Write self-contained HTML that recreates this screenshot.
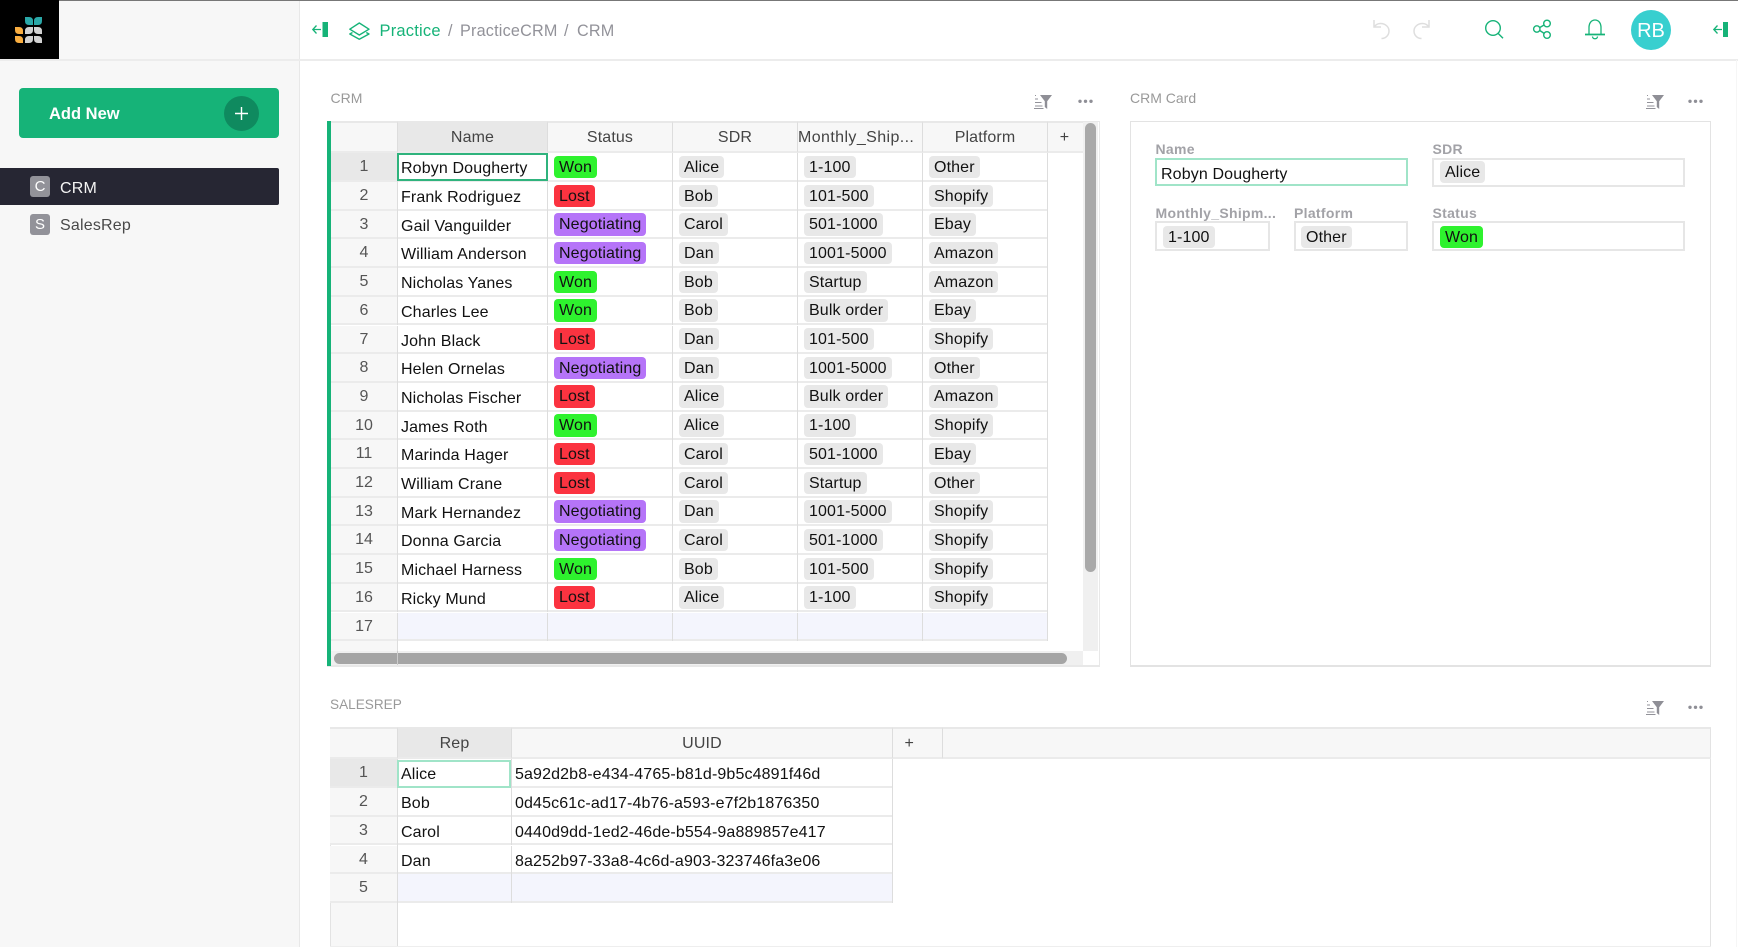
<!DOCTYPE html>
<html><head><meta charset="utf-8"><title>CRM</title>
<style>
*{box-sizing:border-box}
html,body{margin:0;padding:0;width:1738px;height:947px;overflow:hidden;background:#fff}
body{font-family:"Liberation Sans",sans-serif;font-size:16px;color:#111;position:relative}
#w{position:absolute;left:0;top:0;width:1738px;height:947px;overflow:hidden;filter:blur(.3px)}
.a{position:absolute}
.r{position:absolute;left:331px;width:716px;height:28.7px;background:#fff}
.r2{left:330px;width:562px}
.l{position:absolute;left:0;right:0;bottom:0;height:2px;background:#ebebeb}
.n{position:absolute;left:0;top:0;width:66px;height:28.7px;background:#f7f7f7;text-align:center;line-height:27px;color:#555;border-bottom:2px solid #ebebeb}
.r2 .n{width:67px}
.c{position:absolute;top:0;height:28.7px;border-left:1px solid #ddd;white-space:nowrap;letter-spacing:.13px;line-height:32px;padding-left:3px}
.c1{left:66px;width:150px}.c2{left:216px;width:125px;padding-left:6px}.c3{left:341px;width:125px;padding-left:6px}.c4{left:466px;width:125px;padding-left:6px}.c5{left:591px;width:125px;padding-left:6px}
.d1{left:67px;width:114px}.d2{left:181px;width:381px}
.p{display:inline-block;height:22.4px;line-height:23px;padding:0 5px;border-radius:4px;background:#e8e8e8;vertical-align:top;margin-top:2.6px;letter-spacing:.13px}
.w{background:#2ef22e}.x{background:#fb3340}.g{background:#b574f8}
.h{position:absolute;top:121px;height:32px;line-height:30.5px;text-align:center;color:#444;background:#f7f7f7;border-left:1px solid #ddd;border-bottom:2px solid #ebebeb;border-top:2px solid #e8e8e8;letter-spacing:.13px;white-space:nowrap;overflow:hidden}
.s{position:absolute;font-size:14px;color:#999;line-height:16px;white-space:nowrap}
.lb{position:absolute;font-size:14px;font-weight:bold;color:#a2a2a7;letter-spacing:.3px;line-height:16px;white-space:nowrap}
.i{position:absolute;border:2px solid #e6e6e6;background:#fff}
.cp{position:absolute}
.bc{position:absolute;top:.5px;line-height:60px;font-size:16.2px;letter-spacing:.2px;color:#929299;white-space:nowrap}
svg{position:absolute;overflow:visible}
</style></head><body><div id="w">

<!-- top line / header -->
<div class="a" style="left:0;top:0;width:1738px;height:1px;background:#777"></div>
<div class="a" style="left:0;top:1px;width:300px;height:946px;background:#f7f7f7;border-right:1px solid #e8e8e8"></div>
<div class="a" style="left:0;top:59px;width:1738px;height:2px;background:#ececec"></div>
<div class="a" style="left:0;top:0;width:59px;height:59px;background:#000"></div>
<svg style="left:0;top:0" width="59" height="59">
<g fill="#2aa8a8"><path d="M25 17h4q4 0 4 4v4h-4q-4 0-4-4z"/><path d="M42 17h-4q-4 0-4 4v4h4q4 0 4-4z"/></g>
<g fill="#f9ae41"><path d="M15 27h4q4 0 4 4v3h-4q-4 0-4-4z"/><path d="M15 36h4q4 0 4 4v3h-4q-4 0-4-4z"/></g>
<g fill="#d2d2d2"><path d="M25 34h4q4 0 4-4v-3h-4q-4 0-4 4z"/><path d="M42 34h-4q-4 0-4-4v-3h4q4 0 4 4z"/><path d="M25 43h4q4 0 4-4v-3h-4q-4 0-4 4z"/><path d="M42 43h-4q-4 0-4-4v-3h4q4 0 4 4z"/></g>
</svg>

<!-- sidebar -->
<div class="a" style="left:19px;top:88px;width:260px;height:50px;background:#16b378;border-radius:4px"></div>
<div class="a" style="left:49px;top:88.5px;line-height:50px;font-weight:bold;font-size:16.5px;color:#fff">Add New</div>
<div class="a" style="left:224px;top:95.5px;width:35px;height:35px;border-radius:50%;background:#0f8a5f"></div>
<svg style="left:224px;top:95.5px" width="35" height="35"><path d="M17.5 11v13M11 17.5h13" stroke="#fff" stroke-width="1.4" fill="none"/></svg>
<div class="a" style="left:0;top:168px;width:279px;height:37px;background:#262633;border-radius:0 2px 2px 0"></div>
<div class="a" style="left:30px;top:176px;width:20px;height:21px;background:#929299;border-radius:3px;color:#fff;text-align:center;line-height:21px;font-size:15px">C</div>
<div class="a" style="left:60px;top:170px;line-height:38px;color:#f4f4f4;letter-spacing:.2px">CRM</div>
<div class="a" style="left:30px;top:214px;width:20px;height:21px;background:#929299;border-radius:3px;color:#fff;text-align:center;line-height:21px;font-size:15px">S</div>
<div class="a" style="left:60px;top:207px;line-height:38px;color:#494949;letter-spacing:.2px">SalesRep</div>

<!-- breadcrumbs -->
<svg style="left:312px;top:22px" width="17" height="16"><path d="M9 7.5H1M4.5 3.5L.8 7.5l3.7 4" stroke="#16b378" stroke-width="1.3" fill="none"/><rect x="10.5" y="0" width="5.5" height="15" fill="#16b378"/></svg>
<svg style="left:349px;top:22px" width="21" height="18" fill="none" stroke="#16b378" stroke-width="1.4" stroke-linejoin="round"><path d="M10.3 1L20 7.2 10.3 13 .8 7.2z"/><path d="M3.5 10.5L.8 12 10.3 17.2 20 12l-2.7-1.5"/></svg>
<div class="bc" style="left:379.5px;color:#16b378;font-size:16.5px">Practice</div>
<div class="bc" style="left:448px">/</div>
<div class="bc" style="left:460px">PracticeCRM</div>
<div class="bc" style="left:564px">/</div>
<div class="bc" style="left:577px">CRM</div>

<!-- header right -->
<svg style="left:1372px;top:19px" width="20" height="21" fill="none" stroke="#dedede" stroke-width="1.5"><path d="M2 1v7h7"/><path d="M2.5 7.5C4 5.5 6 4.5 8.5 4.5c5 0 8.5 3.5 8.5 7.5s-3 7.5-7.5 7.5"/></svg>
<svg style="left:1411px;top:19px" width="20" height="21" fill="none" stroke="#dedede" stroke-width="1.5"><path d="M18 1v7h-7"/><path d="M17.5 7.5C16 5.5 14 4.500 11.500 4.500c-5 0-8.500 3.500-8.500 7.500s3 7.500 7.500 7.500"/></svg>
<svg style="left:1485px;top:20px" width="19" height="19" fill="none" stroke="#16b378" stroke-width="1.4"><circle cx="8" cy="8" r="7.300"/><path d="M13 13.200l5 5"/></svg>
<svg style="left:1533px;top:19px" width="19" height="21" fill="none" stroke="#16b378" stroke-width="1.4"><circle cx="14" cy="4.500" r="3.300"/><circle cx="14" cy="16" r="3.300"/><circle cx="3.800" cy="10" r="3.200"/><path d="M6.800 8.500l4.300-2.500M6.800 11.500l4.500 3"/></svg>
<svg style="left:1585px;top:19px" width="21" height="21" fill="none" stroke="#16b378" stroke-width="1.3"><path d="M4 15V8.500C4 4 6.500 1 10 1s6 3 6 7.500V15"/><path d="M0 15.500h20" stroke-width="1.8"/><path d="M7.500 17.500c0 3 5 3 5 0"/></svg>
<div class="a" style="left:1631px;top:9.5px;width:40px;height:40px;border-radius:50%;background:#38cfcf;color:#fff;text-align:center;line-height:43px;font-size:20px">RB</div>
<svg style="left:1713px;top:22px" width="17" height="16"><path d="M9 7.500H1M4.500 3.500L.8 7.500l3.700 4" stroke="#16b378" stroke-width="1.300" fill="none"/><rect x="10" y="0" width="5" height="15" fill="#16b378"/></svg>

<!-- CRM title -->
<div class="s" style="left:330.500px;top:90px">CRM</div>
<svg style="left:1034px;top:94px" width="18" height="16"><use href="#fi"/></svg>
<svg style="left:1078px;top:98px" width="16" height="6"><use href="#dt"/></svg>
<svg width="0" height="0" style="left:0;top:0"><defs>
<g id="fi"><path d="M6 1h12l-4.800 6.200V15l-2.400-2V7.200z" fill="#8f8f96"/><path d="M1 1.500h1M1 5h3M1 8.500h6.500M1 12h7.500" stroke="#929299" stroke-width="1" fill="none"/><path d="M0 14.500h9.500" stroke="#929299" stroke-width="1" fill="none"/></g>
<g id="dt" fill="#8f8f96"><circle cx="2" cy="3.300" r="1.700"/><circle cx="7.500" cy="3.300" r="1.700"/><circle cx="13" cy="3.300" r="1.700"/></g>
</defs></svg>

<!-- CRM grid frame -->
<div class="a" style="left:327px;top:121px;width:772.500px;height:545.500px;background:#fff;border:1px solid #e8e8e8;border-bottom-width:2px;border-left:0"></div>
<div class="a" style="left:327px;top:121px;width:4px;height:545px;background:#16b378"></div>
<div class="h" style="left:331px;width:66px;border-left:0"></div>
<div class="h" style="left:397px;width:150px;background:#e8e8e8">Name</div>
<div class="h" style="left:547px;width:125px">Status</div>
<div class="h" style="left:672px;width:125px">SDR</div>
<div class="h" style="left:797px;width:125px;text-align:left;padding-left:0;letter-spacing:.4px">Monthly_Ship...</div>
<div class="h" style="left:922px;width:125px">Platform</div>
<div class="h" style="left:1047px;width:36px;padding-right:2px">+</div>

<div class="r" style="top:153.300px"><div class="l"></div><div class="n" style="background:#e8e8e8">1</div><div class="c c1">Robyn Dougherty</div><div class="c c2"><span class="p w">Won</span></div><div class="c c3"><span class="p">Alice</span></div><div class="c c4"><span class="p">1-100</span></div><div class="c c5"><span class="p">Other</span></div></div>
<div class="r" style="top:182px"><div class="l"></div><div class="n">2</div><div class="c c1">Frank Rodriguez</div><div class="c c2"><span class="p x">Lost</span></div><div class="c c3"><span class="p">Bob</span></div><div class="c c4"><span class="p">101-500</span></div><div class="c c5"><span class="p">Shopify</span></div></div>
<div class="r" style="top:210.700px"><div class="l"></div><div class="n">3</div><div class="c c1">Gail Vanguilder</div><div class="c c2"><span class="p g">Negotiating</span></div><div class="c c3"><span class="p">Carol</span></div><div class="c c4"><span class="p">501-1000</span></div><div class="c c5"><span class="p">Ebay</span></div></div>
<div class="r" style="top:239.400px"><div class="l"></div><div class="n">4</div><div class="c c1">William Anderson</div><div class="c c2"><span class="p g">Negotiating</span></div><div class="c c3"><span class="p">Dan</span></div><div class="c c4"><span class="p">1001-5000</span></div><div class="c c5"><span class="p">Amazon</span></div></div>
<div class="r" style="top:268.100px"><div class="l"></div><div class="n">5</div><div class="c c1">Nicholas Yanes</div><div class="c c2"><span class="p w">Won</span></div><div class="c c3"><span class="p">Bob</span></div><div class="c c4"><span class="p">Startup</span></div><div class="c c5"><span class="p">Amazon</span></div></div>
<div class="r" style="top:296.800px"><div class="l"></div><div class="n">6</div><div class="c c1">Charles Lee</div><div class="c c2"><span class="p w">Won</span></div><div class="c c3"><span class="p">Bob</span></div><div class="c c4"><span class="p">Bulk order</span></div><div class="c c5"><span class="p">Ebay</span></div></div>
<div class="r" style="top:325.500px"><div class="l"></div><div class="n">7</div><div class="c c1">John Black</div><div class="c c2"><span class="p x">Lost</span></div><div class="c c3"><span class="p">Dan</span></div><div class="c c4"><span class="p">101-500</span></div><div class="c c5"><span class="p">Shopify</span></div></div>
<div class="r" style="top:354.200px"><div class="l"></div><div class="n">8</div><div class="c c1">Helen Ornelas</div><div class="c c2"><span class="p g">Negotiating</span></div><div class="c c3"><span class="p">Dan</span></div><div class="c c4"><span class="p">1001-5000</span></div><div class="c c5"><span class="p">Other</span></div></div>
<div class="r" style="top:382.900px"><div class="l"></div><div class="n">9</div><div class="c c1">Nicholas Fischer</div><div class="c c2"><span class="p x">Lost</span></div><div class="c c3"><span class="p">Alice</span></div><div class="c c4"><span class="p">Bulk order</span></div><div class="c c5"><span class="p">Amazon</span></div></div>
<div class="r" style="top:411.600px"><div class="l"></div><div class="n">10</div><div class="c c1">James Roth</div><div class="c c2"><span class="p w">Won</span></div><div class="c c3"><span class="p">Alice</span></div><div class="c c4"><span class="p">1-100</span></div><div class="c c5"><span class="p">Shopify</span></div></div>
<div class="r" style="top:440.300px"><div class="l"></div><div class="n">11</div><div class="c c1">Marinda Hager</div><div class="c c2"><span class="p x">Lost</span></div><div class="c c3"><span class="p">Carol</span></div><div class="c c4"><span class="p">501-1000</span></div><div class="c c5"><span class="p">Ebay</span></div></div>
<div class="r" style="top:469px"><div class="l"></div><div class="n">12</div><div class="c c1">William Crane</div><div class="c c2"><span class="p x">Lost</span></div><div class="c c3"><span class="p">Carol</span></div><div class="c c4"><span class="p">Startup</span></div><div class="c c5"><span class="p">Other</span></div></div>
<div class="r" style="top:497.700px"><div class="l"></div><div class="n">13</div><div class="c c1">Mark Hernandez</div><div class="c c2"><span class="p g">Negotiating</span></div><div class="c c3"><span class="p">Dan</span></div><div class="c c4"><span class="p">1001-5000</span></div><div class="c c5"><span class="p">Shopify</span></div></div>
<div class="r" style="top:526.400px"><div class="l"></div><div class="n">14</div><div class="c c1">Donna Garcia</div><div class="c c2"><span class="p g">Negotiating</span></div><div class="c c3"><span class="p">Carol</span></div><div class="c c4"><span class="p">501-1000</span></div><div class="c c5"><span class="p">Shopify</span></div></div>
<div class="r" style="top:555.100px"><div class="l"></div><div class="n">15</div><div class="c c1">Michael Harness</div><div class="c c2"><span class="p w">Won</span></div><div class="c c3"><span class="p">Bob</span></div><div class="c c4"><span class="p">101-500</span></div><div class="c c5"><span class="p">Shopify</span></div></div>
<div class="r" style="top:583.800px"><div class="l"></div><div class="n">16</div><div class="c c1">Ricky Mund</div><div class="c c2"><span class="p x">Lost</span></div><div class="c c3"><span class="p">Alice</span></div><div class="c c4"><span class="p">1-100</span></div><div class="c c5"><span class="p">Shopify</span></div></div>
<div class="r" style="top:612.500px;background:#f4f5fd"><div class="l"></div><div class="n">17</div><div class="c c1"></div><div class="c c2"></div><div class="c c3"></div><div class="c c4"></div><div class="c c5"></div></div>
<div class="a" style="left:1047px;top:153px;width:1px;height:488px;background:#ddd"></div>
<div class="a" style="left:397px;top:153.300px;width:151px;height:27.800px;border:2px solid #2fb37d"></div>
<!-- scroll -->
<div class="a" style="left:331px;top:641px;width:66px;height:24px;background:#f7f7f7"></div>
<div class="a" style="left:397px;top:641px;width:1px;height:24px;background:#ddd"></div>
<div class="a" style="left:1083px;top:122px;width:15px;height:529px;background:#f0f0f0"></div>
<div class="a" style="left:1085px;top:123px;width:11px;height:449px;background:#a9a9a9;border-radius:6px"></div>
<div class="a" style="left:331px;top:651px;width:752px;height:14px;background:#f0f0f0"></div>
<div class="a" style="left:334px;top:652.500px;width:733px;height:11px;background:#a5a5a5;border-radius:6px"></div>
<div class="a" style="left:397px;top:651px;width:1px;height:14px;background:#ccc"></div>

<!-- card -->
<div class="s" style="left:1130px;top:90px">CRM Card</div>
<svg style="left:1646px;top:94px" width="18" height="16"><use href="#fi"/></svg>
<svg style="left:1688px;top:98px" width="16" height="6"><use href="#dt"/></svg>
<div class="a" style="left:1130px;top:121px;width:581px;height:545.500px;border:1px solid #e3e3e3;border-bottom-width:2px"></div>
<div class="lb" style="left:1155.500px;top:141px">Name</div>
<div class="i" style="left:1155px;top:158px;width:253px;height:27.500px;border-color:#a0e4c8"></div>
<div class="a" style="left:1161px;top:159px;line-height:31px;height:28px;letter-spacing:.13px">Robyn Dougherty</div>
<div class="lb" style="left:1432.500px;top:141px">SDR</div>
<div class="i" style="left:1432px;top:158px;width:253px;height:29px"></div>
<div class="cp" style="left:1440px;top:158.500px"><span class="p">Alice</span></div>
<div class="lb" style="left:1155.500px;top:205px">Monthly_Shipm...</div>
<div class="i" style="left:1155px;top:221px;width:115px;height:30px"></div>
<div class="cp" style="left:1163px;top:223.500px"><span class="p">1-100</span></div>
<div class="lb" style="left:1294px;top:205px">Platform</div>
<div class="i" style="left:1294px;top:221px;width:114px;height:30px"></div>
<div class="cp" style="left:1301px;top:223.500px"><span class="p">Other</span></div>
<div class="lb" style="left:1432.500px;top:205px">Status</div>
<div class="i" style="left:1432px;top:221px;width:253px;height:30px"></div>
<div class="cp" style="left:1440px;top:223.500px"><span class="p w">Won</span></div>

<!-- SALESREP -->
<div class="s" style="left:330px;top:697px;font-size:13.600px">SALESREP</div>
<svg style="left:1646px;top:700px" width="18" height="16"><use href="#fi"/></svg>
<svg style="left:1688px;top:704px" width="16" height="6"><use href="#dt"/></svg>
<div class="a" style="left:330px;top:727px;width:1381px;height:221px;border:1px solid #e3e3e3;border-top:0"></div>
<div class="a" style="left:330px;top:946px;width:1381px;height:1px;background:#eee"></div>
<div class="h" style="top:727px;left:330px;width:68px;border-left:0"></div>
<div class="h" style="top:727px;left:397px;width:114px;background:#e8e8e8">Rep</div>
<div class="h" style="top:727px;left:511px;width:381px">UUID</div>
<div class="h" style="top:727px;left:892px;width:50px;text-align:left;padding-left:11.500px">+</div>
<div class="h" style="top:727px;left:942px;width:769px;border-right:1px solid #e3e3e3"></div>
<div class="a" style="left:331px;top:903px;width:66px;height:43px;background:#f7f7f7"></div>
<div class="a" style="left:397px;top:759px;width:1px;height:187px;background:#ddd"></div>

<div class="r r2" style="top:759.300px"><div class="l"></div><div class="n" style="background:#e8e8e8">1</div><div class="c d1">Alice</div><div class="c d2">5a92d2b8-e434-4765-b81d-9b5c4891f46d</div></div>
<div class="r r2" style="top:788px"><div class="l"></div><div class="n">2</div><div class="c d1">Bob</div><div class="c d2">0d45c61c-ad17-4b76-a593-e7f2b1876350</div></div>
<div class="r r2" style="top:816.700px"><div class="l"></div><div class="n">3</div><div class="c d1">Carol</div><div class="c d2">0440d9dd-1ed2-46de-b554-9a889857e417</div></div>
<div class="r r2" style="top:845.600px"><div class="l"></div><div class="n">4</div><div class="c d1">Dan</div><div class="c d2">8a252b97-33a8-4c6d-a903-323746fa3e06</div></div>
<div class="r r2" style="top:874.300px;background:#f4f5fd"><div class="l"></div><div class="n">5</div><div class="c d1"></div><div class="c d2"></div></div>
<div class="a" style="left:892px;top:759px;width:1px;height:144px;background:#ddd"></div>
<div class="a" style="left:397px;top:760px;width:114px;height:27.500px;border:2px solid #a0e4c8"></div>
<div class="a" style="left:1736px;top:60px;width:1px;height:887px;background:#f6f6f6"></div>
</div></body></html>
